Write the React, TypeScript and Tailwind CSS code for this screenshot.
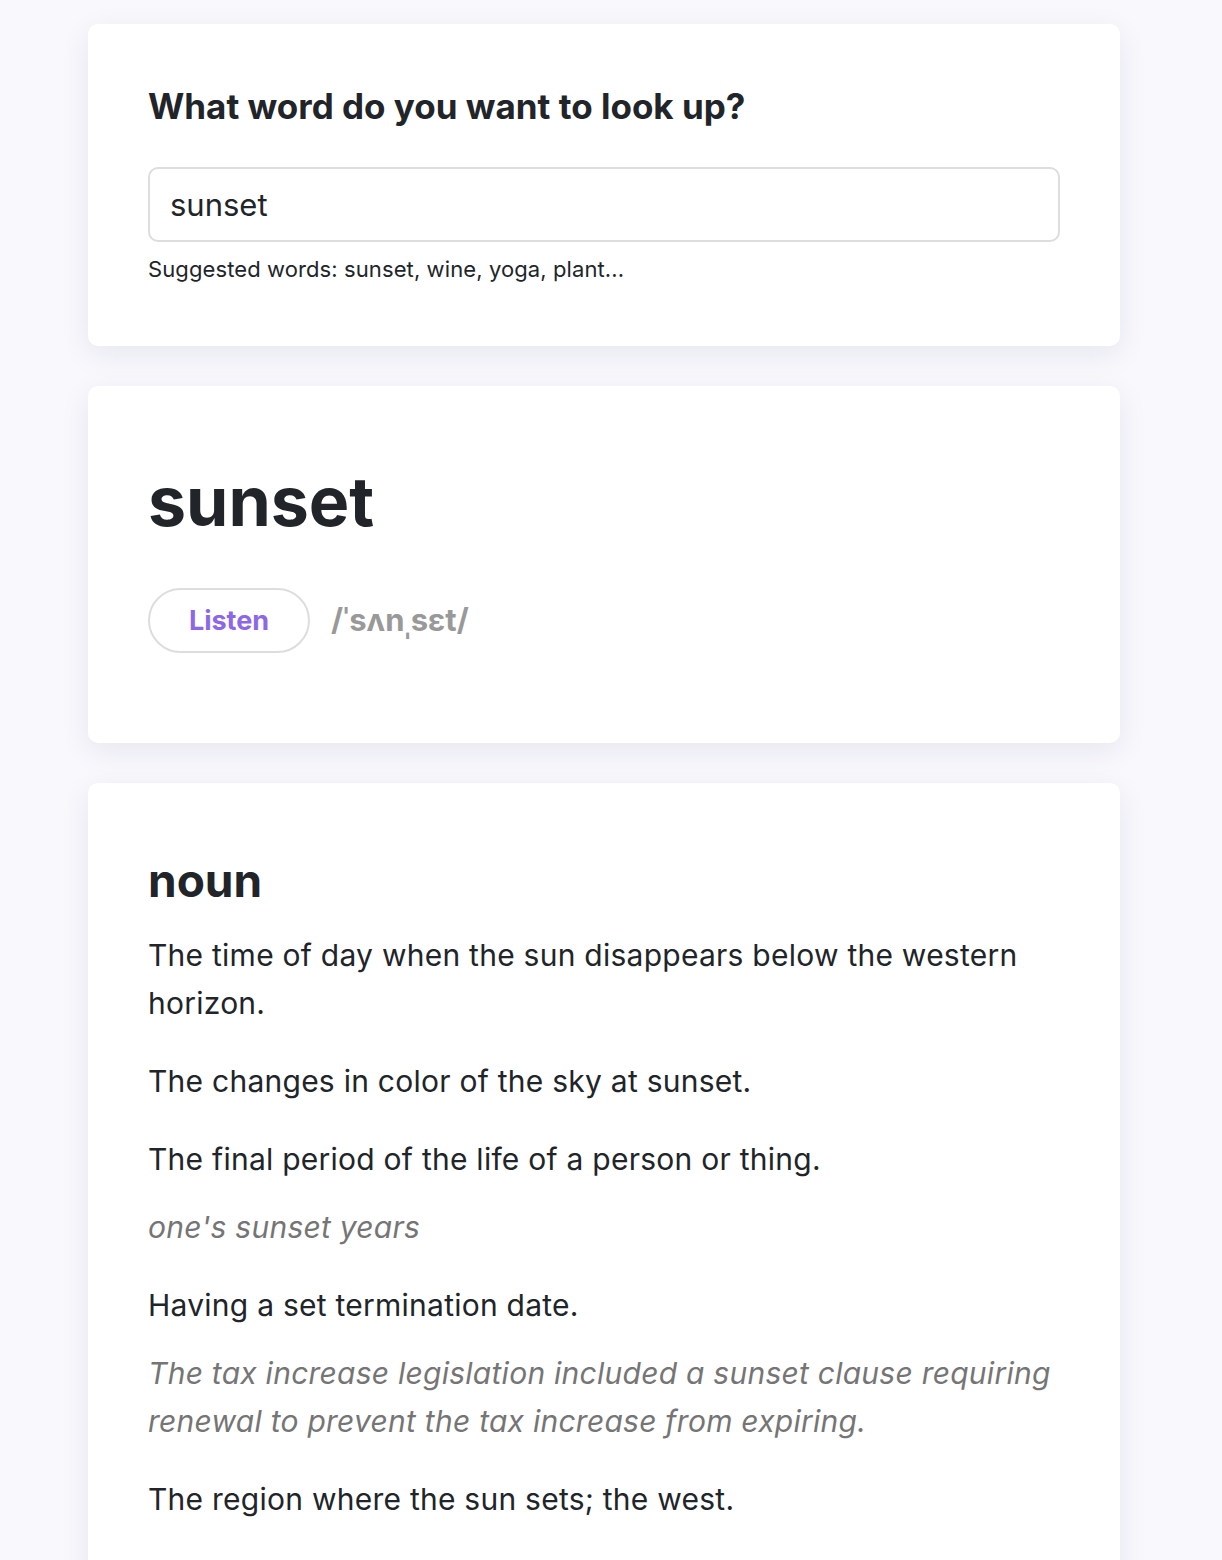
import React from "react";

export default function App() {
  const font = { fontFamily: "Inter, 'Noto Sans', sans-serif" };
  return (
    <div className="min-h-[1560px] bg-[#f8f8fd] pt-6 pb-10" style={font}>
      <div className="ml-[88px] w-[1032px] flex flex-col gap-10">
        <section className="bg-white rounded-[10px] shadow-[0_8px_30px_rgba(30,30,70,0.08)] px-[60px] pt-[61px] pb-[60px]">
          <h1 className="text-[35px] leading-[42px] font-bold text-[#212529]">What word do you want to look up?</h1>
          <input
            readOnly
            value="sunset"
            className="mt-[40px] block w-full h-[75px] rounded-[10px] border-2 border-[#ddd] px-[20px] text-[31px] text-[#212529] outline-none bg-white"
          />
          <p className="mt-[11px] text-[22px] leading-[33px] tracking-[0.1px] text-[#212529]">Suggested words: sunset, wine, yoga, plant...</p>
        </section>

        <section className="bg-white rounded-[10px] shadow-[0_8px_30px_rgba(30,30,70,0.08)] px-[60px] pt-[74px] pb-[90px]">
          <h2 className="text-[68px] leading-[82px] font-bold text-[#212529]">sunset</h2>
          <div className="mt-[46px] flex items-center gap-[21px]">
            <button className="h-[65px] w-[162px] rounded-full border-2 border-[#ddd] text-[27px] font-bold text-[#8c68e8] bg-white pt-[2px]">Listen</button>
            <span className="text-[31px] font-bold text-[#999]">/ˈsʌnˌsɛt/</span>
          </div>
        </section>

        <section className="bg-white rounded-[10px] shadow-[0_8px_30px_rgba(30,30,70,0.08)] px-[60px] pt-[70px] pb-[60px]">
          <h3 className="text-[46px] leading-[55px] font-bold text-[#212529]">noun</h3>
          <div className="mt-[23px] text-[30px] leading-[48px] tracking-[0.25px] text-[#212529] flex flex-col gap-[30px]">
            <p>The time of day when the sun disappears below the western horizon.</p>
            <p>The changes in color of the sky at sunset.</p>
            <div>
              <p>The final period of the life of a person or thing.</p>
              <p className="mt-[20px] italic text-[#757575]">one's sunset years</p>
            </div>
            <div>
              <p>Having a set termination date.</p>
              <p className="mt-[20px] italic text-[#757575]">The tax increase legislation included a sunset clause requiring renewal to prevent the tax increase from expiring.</p>
            </div>
            <p>The region where the sun sets; the west.</p>
          </div>
        </section>
      </div>
    </div>
  );
}
